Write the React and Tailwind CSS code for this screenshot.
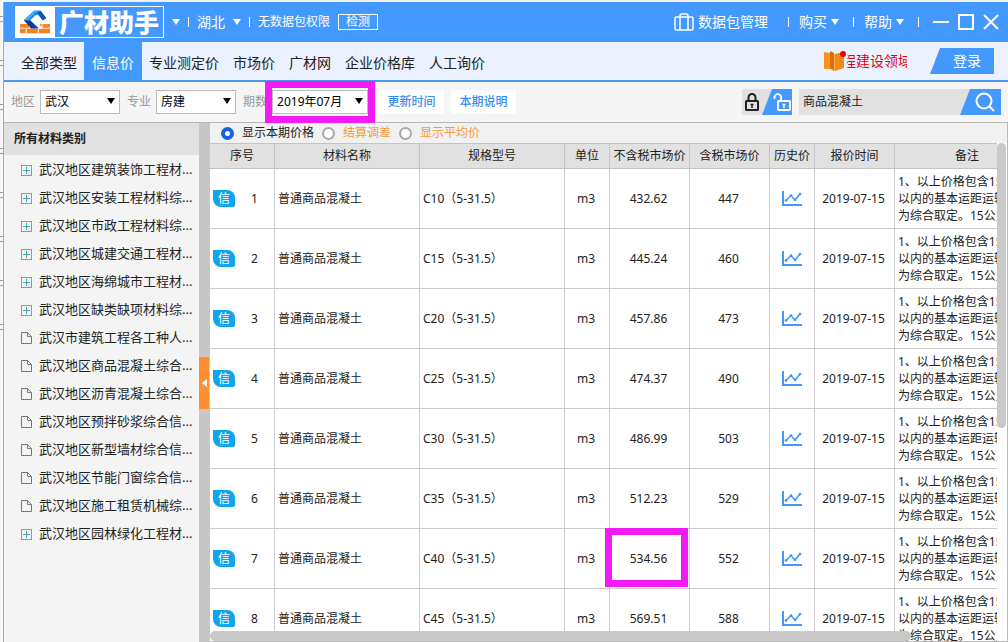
import React, { useState } from 'react';
import clsx from 'clsx';

const tabs = ['全部类型', '信息价', '专业测定价', '市场价', '广材网', '企业价格库', '人工询价'];

const categories = [
  { name: '武汉地区建筑装饰工程材...', folder: true },
  { name: '武汉地区安装工程材料综...', folder: true },
  { name: '武汉地区市政工程材料综...', folder: true },
  { name: '武汉地区城建交通工程材...', folder: true },
  { name: '武汉地区海绵城市工程材...', folder: true },
  { name: '武汉地区缺类缺项材料综...', folder: true },
  { name: '武汉市建筑工程各工种人...', folder: false },
  { name: '武汉地区商品混凝土综合...', folder: false },
  { name: '武汉地区沥青混凝土综合...', folder: false },
  { name: '武汉地区预拌砂浆综合信...', folder: false },
  { name: '武汉地区新型墙材综合信...', folder: false },
  { name: '武汉地区节能门窗综合信...', folder: false },
  { name: '武汉地区施工租赁机械综...', folder: false },
  { name: '武汉地区园林绿化工程材...', folder: true },
];

const columns = [
  { title: '序号', width: 'w-[65px]' },
  { title: '材料名称', width: 'w-[145px]' },
  { title: '规格型号', width: 'w-[145px]' },
  { title: '单位', width: 'w-[45px]' },
  { title: '不含税市场价', width: 'w-[80px]' },
  { title: '含税市场价', width: 'w-[80px]' },
  { title: '历史价', width: 'w-[45px]' },
  { title: '报价时间', width: 'w-[80px]' },
  { title: '备注', width: 'w-[145px]' },
];

const rows = [
  { id: 1, spec: 'C10（5-31.5）', net: '432.62', gross: '447' },
  { id: 2, spec: 'C15（5-31.5）', net: '445.24', gross: '460' },
  { id: 3, spec: 'C20（5-31.5）', net: '457.86', gross: '473' },
  { id: 4, spec: 'C25（5-31.5）', net: '474.37', gross: '490' },
  { id: 5, spec: 'C30（5-31.5）', net: '486.99', gross: '503' },
  { id: 6, spec: 'C35（5-31.5）', net: '512.23', gross: '529' },
  { id: 7, spec: 'C40（5-31.5）', net: '534.56', gross: '552', marked: true },
  { id: 8, spec: 'C45（5-31.5）', net: '569.51', gross: '588' },
];

const note = ['1、以上价格包含15公里', '以内的基本运距运输费用', '为综合取定。15公里以外'];

const Caret = ({ className }) => (
  <svg viewBox="0 0 8 6" className={clsx('h-[6px] w-2 shrink-0', className)} fill="currentColor" aria-hidden="true">
    <path d="M0 0h8L4 6z" />
  </svg>
);

const Separator = () => <span className="h-[10px] w-px shrink-0 bg-white" />;

const Logo = () => (
  <svg viewBox="0 0 39 32" className="h-full w-[39px] bg-white" aria-hidden="true">
    <path fill="#f58220" d="M3 18h10v4H3zM14 18h12v4H14zM27 18h8v4h-8zM3 23h6v5H3zM10 23h12v5H10zM23 23h12v5H23z" />
    <path fill="#fff" d="M12 14l9-7 7 5-5 3-2 1 6 7h-8z" />
    <path fill="#2f9bf5" d="M7 14L18 4h7L14 14z" />
    <path fill="#1577e0" d="M18 4h7l6 8-4 2-5-6h-3l-7 6H7z" />
    <path fill="#3fb0f8" d="M7 14L18 4h4L11 14z" />
    <path fill="#0b3f96" d="M7 14h7l9 9h-8z" />
    <path fill="#0f52b8" d="M25 4l6 8-4 2-5-7z" />
    <path fill="none" stroke="#fff" strokeWidth="1.500" d="M21 20l7-5 4 3" />
  </svg>
);

const SuitcaseIcon = () => (
  <svg viewBox="0 0 20 18" className="h-[18px] w-5" fill="none" stroke="currentColor" strokeWidth="1.5" aria-hidden="true">
    <rect x="1" y="4" width="18" height="13" rx="1.5" />
    <path d="M6 17V2.500Q6 1 7.500 1h5Q14 1 14 2.500V17" />
  </svg>
);

const BookIcon = () => (
  <svg viewBox="0 0 23 20" className="h-5 w-[23px] shrink-0" aria-hidden="true">
    <path fill="#f7941d" d="M0 1l6 1 4 2v16l-4-2H0z" />
    <path fill="#d96f0c" d="M6 0l4 2v17l-4-2z" />
    <path fill="#f58a1a" d="M11 3l9-2v16l-9 3z" />
    <path fill="#ffb45a" d="M10 3h1v17h-1z" />
    <circle cx="19" cy="3" r="3" fill="#f00000" />
  </svg>
);

const LockIcon = () => (
  <svg viewBox="0 0 14 18" className="h-[18px] w-[14px]" fill="none" stroke="currentColor" strokeWidth="2" aria-hidden="true">
    <rect x="1" y="8" width="12" height="9" rx=".5" />
    <path d="M3.500 8V4.500a3.500 3.500 0 0 1 7 0V8" />
    <path strokeWidth="1.500" d="M7 11v4M5.500 11.500h3" />
  </svg>
);

const UnlockIcon = () => (
  <svg viewBox="0 0 18 18" className="h-[18px] w-[18px]" fill="none" stroke="currentColor" strokeWidth="1.800" aria-hidden="true">
    <rect x="5" y="8" width="12" height="9" rx=".5" />
    <path d="M1.500 6V4.500a3.300 3.300 0 0 1 6.600 0V8" />
    <path strokeWidth="1.500" d="M11 11v4M9.500 11.500h3" />
  </svg>
);

const TreeIcon = ({ folder }) =>
  folder ? (
    <svg viewBox="0 0 11 11" className="h-[11px] w-[11px] shrink-0" fill="none" aria-hidden="true">
      <rect x=".5" y=".5" width="10" height="10" stroke="#8a9a9e" />
      <path d="M2 5.500h7M5.500 2v7" stroke="#3fa3b5" />
    </svg>
  ) : (
    <svg viewBox="0 0 11 12" className="h-3 w-[11px] shrink-0" fill="none" stroke="#777" aria-hidden="true">
      <path d="M.5.5h6l4 4v7H.5zM6.500.5v4h4" />
    </svg>
  );

const ChartIcon = () => (
  <svg viewBox="0 0 20 15" className="h-[15px] w-5" fill="none" stroke="#4499f5" aria-hidden="true">
    <path strokeWidth="2" d="M1 0v14h19" />
    <path strokeWidth="1.500" d="M4 9.500l5-5 4 4.500 5-6" />
    <path strokeWidth="2.800" strokeLinecap="round" d="M4 9.500h0M9 4.700h0M13 8.800h0M18 3.200h0" />
  </svg>
);

const SelectBox = ({ id, label, value, width, marked }) => (
  <>
    <label htmlFor={id} className="mr-[5px] text-[#999]">{label}</label>
    <div className={clsx('relative', width)}>
      <select
        id={id}
        defaultValue={value}
        className="block h-6 w-full appearance-none border border-[#bbb] bg-white pl-1 leading-[22px] text-black outline-none"
      >
        <option>{value}</option>
      </select>
      <Caret className="pointer-events-none absolute right-[5px] top-2" />
      {marked && <span className="pointer-events-none absolute -inset-x-[7px] -inset-y-[9px] border-[7px] border-[#f31bf3]" />}
    </div>
  </>
);

const TitleBar = () => (
  <header className="flex h-10 shrink-0 items-center bg-[#4399fe] text-sm text-white">
    <div className="ml-[11px] flex h-8 items-center border border-white">
      <Logo />
      <h1 className="px-1 text-[25px] font-black leading-[30px]">广材助手</h1>
    </div>
    <div className="ml-2 flex items-center gap-2">
      <Caret />
      <Separator />
      <button className="flex items-center gap-2">湖北 <Caret /></button>
      <Separator />
      <span className="text-xs">无数据包权限</span>
      <button className="h-4 w-10 border border-white text-xs leading-[14px]">检测</button>
    </div>
    <div className="ml-auto mr-[9px] flex items-center gap-[10px]">
      <button className="mr-[10px] flex items-center gap-1"><SuitcaseIcon /> 数据包管理</button>
      <Separator />
      <button className="mr-1 flex items-center gap-1">购买 <Caret /></button>
      <Separator />
      <button className="mr-1 flex items-center gap-1">帮助 <Caret /></button>
      <Separator />
      <div className="ml-1 flex items-center gap-[9px]">
        <button aria-label="最小化" className="h-[2px] w-4 bg-white" />
        <button aria-label="最大化" className="h-4 w-4 border-2 border-white" />
        <button aria-label="关闭">
          <svg viewBox="0 0 16 16" className="h-4 w-4" stroke="currentColor" strokeWidth="2" aria-hidden="true">
            <path d="M1 1l14 14M15 1L1 15" />
          </svg>
        </button>
      </div>
    </div>
  </header>
);

const NavBar = ({ active, setActive }) => (
  <nav className="flex h-10 shrink-0 items-stretch border-b-2 border-[#4b97ea] bg-[#ebf1fe] pl-[10px] text-sm">
    {tabs.map((tab) => (
      <button
        key={tab}
        onClick={() => setActive(tab)}
        className={clsx('pt-1', active === tab ? 'bg-[#4399fe] px-2 text-white' : 'px-[7px] text-[#222]')}
      >
        {tab}
      </button>
    ))}
    <div className="ml-auto mr-[14px] flex items-center">
      <BookIcon />
      <a href="#news" className="flex w-[60px] justify-center overflow-hidden whitespace-nowrap text-[#e60012]">
        <span>程建设领域</span>
      </a>
      <button className="ml-[23px] h-[26px] w-16 bg-[#4399fe] pl-[10px] text-white [clip-path:polygon(10px_0,100%_0,100%_100%,0_100%)]">
        登录
      </button>
    </div>
  </nav>
);

const Toolbar = () => (
  <div className="flex h-[41px] shrink-0 items-center border-b border-[#b5b5b5] bg-[#f5f5f5] px-[7px]">
    <div className="flex items-center">
      <SelectBox id="area" label="地区" value="武汉" width="mr-[7px] w-20" />
      <SelectBox id="major" label="专业" value="房建" width="mr-[7px] w-20" />
      <SelectBox id="period" label="期数" value="2019年07月" width="mr-[11px] w-24" marked />
      <button className="mr-[7px] h-6 w-[65px] bg-white font-medium text-[#3d8ef0]">更新时间</button>
      <button className="h-6 w-[65px] bg-white font-medium text-[#3d8ef0]">本期说明</button>
    </div>
    <div className="ml-auto flex h-[26px] items-stretch">
      <div className="mr-[7px] flex bg-[#e1e1e1]">
        <button aria-label="锁定" className="w-5 pl-[3px] text-[#222]"><LockIcon /></button>
        <button
          aria-label="解锁"
          className="w-[30px] bg-[#4399fe] pl-[11px] text-white [clip-path:polygon(10px_0,100%_0,100%_100%,0_100%)]"
        >
          <UnlockIcon />
        </button>
      </div>
      <input
        aria-label="搜索"
        defaultValue="商品混凝土"
        className="w-[161px] bg-[#e1e1e1] pl-1 text-[#222] outline-none"
      />
      <div className="bg-[#e1e1e1]">
        <button
          aria-label="搜索材料"
          className="flex h-full w-[41px] items-center justify-end bg-[#4399fe] pr-[6px] text-white [clip-path:polygon(10px_0,100%_0,100%_100%,0_100%)]"
        >
          <svg viewBox="0 0 20 20" className="h-5 w-5" fill="none" stroke="currentColor" strokeWidth="2" aria-hidden="true">
            <circle cx="9" cy="9" r="7.500" />
            <path d="M14.500 14.500L19 19" />
          </svg>
        </button>
      </div>
    </div>
  </div>
);

const Sidebar = () => (
  <aside className="w-[195px] shrink-0 bg-[#f4f4f4]">
    <h2 className="h-8 bg-[#e1e1e1] pl-[10px] font-bold leading-8 text-[#222]">所有材料类别</h2>
    <ul className="pt-px text-[13px] text-[#222]">
      {categories.map((item) => (
        <li key={item.name} className="flex h-7 items-center gap-[7px] whitespace-nowrap pl-[17px]">
          <TreeIcon folder={item.folder} />
          {item.name}
        </li>
      ))}
    </ul>
  </aside>
);

const PriceTable = () => {
  const cell = 'h-[60px] border-b border-r border-[#ccc]';
  const centered = clsx(cell, 'py-0 pl-0 pr-[2px] text-center');
  const left = clsx(cell, 'py-0 pl-[3px] pr-0');
  return (
    <table className="w-[830px] table-fixed border-separate border-spacing-0 text-[#222]">
      <thead>
        <tr>
          {columns.map((col) => (
            <th
              key={col.title}
              className={clsx('h-[26px] whitespace-nowrap border-y border-r border-[#c4c4c4] bg-[#e1e1e1] p-0 font-normal', col.width)}
            >
              {col.title}
            </th>
          ))}
        </tr>
      </thead>
      <tbody>
        {rows.map((row) => (
          <tr key={row.id}>
            <td className={left}>
              <div className="flex items-center gap-4">
                <span className="h-[17px] w-[22px] rounded-bl-lg rounded-br-xs rounded-tr-lg bg-[#0ea5ec] text-center leading-[17px] text-white">信</span>
                {row.id}
              </div>
            </td>
            <td className={left}>普通商品混凝土</td>
            <td className={left}>{row.spec}</td>
            <td className={centered}>m3</td>
            <td className={clsx(centered, 'relative')}>
              {row.net}
              {row.marked && <span className="pointer-events-none absolute -left-[5px] -top-px bottom-px right-px border-[7px] border-[#f31bf3]" />}
            </td>
            <td className={centered}>{row.gross}</td>
            <td className={cell}><div className="flex justify-center"><ChartIcon /></div></td>
            <td className={centered}>2019-07-15</td>
            <td className={clsx(left, 'whitespace-nowrap leading-[17px]')}>
              {note.map((line) => <p key={line}>{line}</p>)}
            </td>
          </tr>
        ))}
      </tbody>
    </table>
  );
};

const App = () => {
  const [active, setActive] = useState('信息价');
  const [mode, setMode] = useState('current');

  const modes = [
    { key: 'current', label: '显示本期价格', color: 'text-[#222]' },
    { key: 'diff', label: '结算调差', color: 'text-[#f59a3c]' },
    { key: 'average', label: '显示平均价', color: 'text-[#f59a3c]' },
  ];

  return (
    <div className="flex h-screen overflow-hidden bg-[#f3f1f1] pt-[2px] font-['Noto_Sans','Noto_Sans_CJK_SC',sans-serif] text-xs">
      {/* edge of the window behind */}
      <div className="flex w-1 shrink-0 flex-col gap-[38px] border-r border-[#aaa] bg-[#f6f6f6] pt-[14px]">
        {[1, 2, 3, 4, 5, 6, 7, 8].map((n) => <span key={n} className="h-[6px] w-[3px] border-y border-[#999]" />)}
      </div>

      <div className="flex min-w-0 flex-1 flex-col">
        <TitleBar />
        <NavBar active={active} setActive={setActive} />
        <Toolbar />

        <div className="flex min-h-0 flex-1">
          <Sidebar />
          <div className="flex w-[11px] shrink-0 items-center bg-[#c8c5c5]">
            <button aria-label="收起" className="flex h-[52px] w-[10px] items-center justify-center bg-[#fd8f30]">
              <svg viewBox="0 0 5 8" className="h-2 w-[5px]" fill="#fff" aria-hidden="true"><path d="M5 0v8L0 4z" /></svg>
            </button>
          </div>

          <main className="flex min-w-0 flex-1 flex-col border-b border-r border-[#bbb] bg-white">
            <div className="flex h-5 shrink-0 items-center gap-2 bg-[#f1f1f1] pl-[11px]">
              {modes.map((m) => (
                <label key={m.key} className={clsx('flex items-center gap-2', m.color)}>
                  <input
                    type="radio"
                    name="mode"
                    checked={mode === m.key}
                    onChange={() => setMode(m.key)}
                    className="h-[13px] w-[13px] appearance-none rounded-full border-2 border-[#aaa] bg-white checked:border-4 checked:border-[#1762e0]"
                  />
                  {m.label}
                </label>
              ))}
            </div>
            <div className="relative min-h-0 flex-1">
              <div className="mr-[10px] h-full overflow-hidden">
                <PriceTable />
              </div>
              <span className="absolute right-px top-0 h-[285px] w-[9px] rounded-full bg-[#c9c9c9]" />
              <span className="absolute bottom-0 left-0 h-[10px] w-[88%] rounded-full bg-[#c9c9c9]" />
            </div>
          </main>
        </div>
      </div>
    </div>
  );
};

export default App;
